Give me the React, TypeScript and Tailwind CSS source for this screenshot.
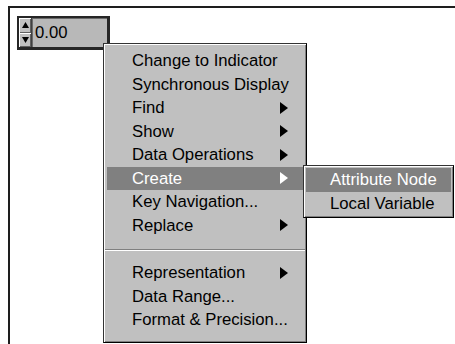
import React from "react";

type Item = { label: string; sub?: boolean; active?: boolean } | "sep";

const items: Item[] = [
  { label: "Change to Indicator" },
  { label: "Synchronous Display" },
  { label: "Find", sub: true },
  { label: "Show", sub: true },
  { label: "Data Operations", sub: true },
  { label: "Create", sub: true, active: true },
  { label: "Key Navigation..." },
  { label: "Replace", sub: true },
  "sep",
  { label: "Representation", sub: true },
  { label: "Data Range..." },
  { label: "Format & Precision..." },
];

function Arrow() {
  return (
    <svg width="8" height="12" viewBox="0 0 8 12" className="shrink-0">
      <polygon points="0,0 8,6 0,12" fill="currentColor" />
    </svg>
  );
}

function SpinButton({ up }: { up?: boolean }) {
  return (
    <div className="flex flex-1 items-center justify-center bg-[#c0c0c0] shadow-[inset_1px_1px_0_#ffffff,inset_-1px_-1px_0_#606060]">
      <svg width="7" height="6" viewBox="0 0 7 6">
        <polygon points={up ? "3.5,0 7,6 0,6" : "0,0 7,0 3.5,6"} fill="#000" />
      </svg>
    </div>
  );
}

export default function App() {
  return (
    <div
      className="relative w-[455px] h-[344px] overflow-hidden bg-white pl-[8px] pt-[6px] text-black"
      style={{ fontFamily: '"Liberation Sans", Arial, sans-serif' }}
    >
      <div className="h-full border-l-2 border-t-2 border-[#1e1e1e] pl-[7px] pt-[8px]">
        {/* numeric control */}
        <div className="flex w-[93px] h-[34px] border-t-2 border-l-2 border-b-[3px] border-r-[3px] border-[#262626] bg-[#c0c0c0]">
          <div className="flex w-[13px] flex-col border-r border-[#404040]">
            <SpinButton up />
            <SpinButton />
          </div>
          <div className="flex-1 border-t border-l border-[#6a6a6a] bg-[#b8b8b8] pl-[2px] text-[16.7px] leading-[28px]">
            0.00
          </div>
        </div>
      </div>

      {/* popup menu */}
      <div className="absolute left-[103px] top-[43px] w-[204px] h-[300px] border border-[#333333] border-r-black border-b-black bg-[#c0c0c0] px-[3px] pt-[5px] shadow-[inset_1px_1px_0_#ffffff,inset_-1px_-1px_0_#808080] text-[16.7px]">
        {items.map((it, i) =>
          it === "sep" ? (
            <div key={i} className="-mx-[2px] mt-[12px] mb-[10px] border-t border-b border-t-[#808080] border-b-white" />
          ) : (
            <div
              key={i}
              className={`flex h-[23.5px] items-center justify-between pl-[25px] pr-[15px] leading-[23.5px] ${
                it.active ? "bg-[#808080] text-white" : ""
              }`}
            >
              <span className="whitespace-nowrap">{it.label}</span>
              {it.sub && <Arrow />}
            </div>
          )
        )}

        {/* submenu */}
        <div className="absolute left-[199px] top-[121px] w-[151px] h-[53px] border border-[#333333] border-r-black border-b-black bg-[#c0c0c0] px-[2px] pt-[2px] shadow-[inset_1px_1px_0_#ffffff,inset_-1px_-1px_0_#808080]">
          <div className="h-[23.5px] bg-[#808080] pl-[24px] leading-[23.5px] text-white whitespace-nowrap">
            Attribute Node
          </div>
          <div className="h-[23.5px] pl-[24px] leading-[23.5px] whitespace-nowrap">Local Variable</div>
        </div>
      </div>
    </div>
  );
}
